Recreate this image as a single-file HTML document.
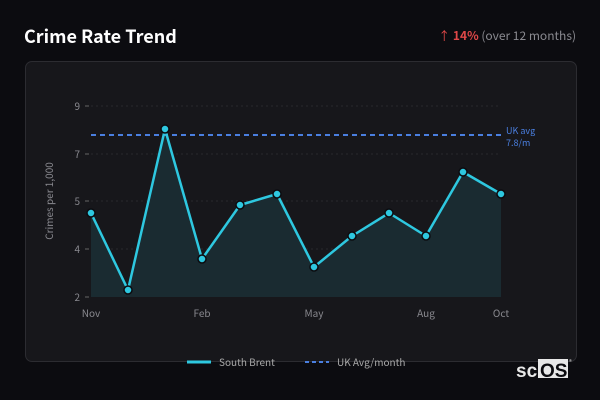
<!DOCTYPE html><html><head><style>
body{margin:0;width:600px;height:400px;background:#0c0c10;font-family:"Noto Sans CJK JP","Liberation Sans",sans-serif;overflow:hidden;position:relative}
.t{position:absolute;left:24px;top:23px;color:#fff;font-weight:bold;font-size:18px;line-height:26px}
.r{position:absolute;right:24px;top:28px;font-size:12px;color:#8a8a90;line-height:16px}
.card{position:absolute;left:24.5px;top:60.5px;width:550px;height:299px;background:#17171b;border:1px solid #2c2c31;border-radius:7px}
</style></head><body>
<div class="t">Crime Rate Trend</div>
<div class="r"><span style="color:#e04848">↑ <b>14%</b></span> (over 12 months)</div>
<div class="card"></div>
<svg width="600" height="400" style="position:absolute;left:0;top:0" font-family="Noto Sans CJK JP,Liberation Sans,sans-serif">
<g stroke="#2a2a2e" stroke-dasharray="2 3" stroke-width="1">
<line x1="91" x2="501" y1="106" y2="106"/><line x1="91" x2="501" y1="154" y2="154"/><line x1="91" x2="501" y1="201" y2="201"/><line x1="91" x2="501" y1="249" y2="249"/></g>
<g fill="#8a8a90" font-size="10" text-anchor="end"><text x="80" y="110">9</text><text x="80" y="158">7</text><text x="80" y="205">5</text><text x="80" y="253">4</text><text x="80" y="301">2</text></g>
<g stroke="#666"><line x1="85" x2="89" y1="106" y2="106"/><line x1="85" x2="89" y1="154" y2="154"/><line x1="85" x2="89" y1="201" y2="201"/><line x1="85" x2="89" y1="249" y2="249"/><line x1="85" x2="89" y1="297" y2="297"/></g>
<g fill="#8a8a90" font-size="10" text-anchor="middle"><text x="91" y="317">Nov</text><text x="202" y="317">Feb</text><text x="314" y="317">May</text><text x="426" y="317">Aug</text><text x="501" y="317">Oct</text></g>
<text transform="translate(53 201) rotate(-90)" fill="#8a8a90" font-size="10" text-anchor="middle">Crimes per 1,000</text>
<path d="M91 213L128 290L165 129L202 259L240 205L277 194L314 267L352 236L389 213L426 236L463 172L501 194L501 297L91 297Z" fill="#1a2b31"/>
<line x1="91" x2="501" y1="135" y2="135" stroke="#4a7fe0" stroke-width="2" stroke-dasharray="5 4"/>
<text x="506" y="134" fill="#4a7fe0" font-size="9">UK avg</text><text x="506" y="146" fill="#4a7fe0" font-size="9">7.8/m</text>
<path d="M91 213L128 290L165 129L202 259L240 205L277 194L314 267L352 236L389 213L426 236L463 172L501 194" fill="none" stroke="#2ec8e0" stroke-width="2.5" stroke-linejoin="round"/>
<g fill="#2ec8e0" stroke="#0c0c10" stroke-width="1.5"><circle cx="91" cy="213" r="4"/><circle cx="128" cy="290" r="4"/><circle cx="165" cy="129" r="4"/><circle cx="202" cy="259" r="4"/><circle cx="240" cy="205" r="4"/><circle cx="277" cy="194" r="4"/><circle cx="314" cy="267" r="4"/><circle cx="352" cy="236" r="4"/><circle cx="389" cy="213" r="4"/><circle cx="426" cy="236" r="4"/><circle cx="463" cy="172" r="4"/><circle cx="501" cy="194" r="4"/></g>
<line x1="187" x2="211" y1="362" y2="362" stroke="#2ec8e0" stroke-width="3"/>
<text x="219" y="366" fill="#aaa" font-size="10">South Brent</text>
<line x1="305" x2="329" y1="362" y2="362" stroke="#4a7fe0" stroke-width="2" stroke-dasharray="4 3"/>
<text x="337" y="366" fill="#aaa" font-size="10">UK Avg/month</text>
<rect x="538" y="359" width="30" height="19" fill="#e8e8e8"/>
<text x="516" y="377" fill="#e8e8e8" font-size="19" font-weight="bold" font-family="Liberation Sans,sans-serif">sc</text>
<text x="540" y="377" fill="#0c0c10" font-size="19" font-weight="bold" font-family="Liberation Sans,sans-serif">OS</text>
<text x="569" y="364" fill="#ccc" font-size="6">®</text>
</svg>
</body></html>
